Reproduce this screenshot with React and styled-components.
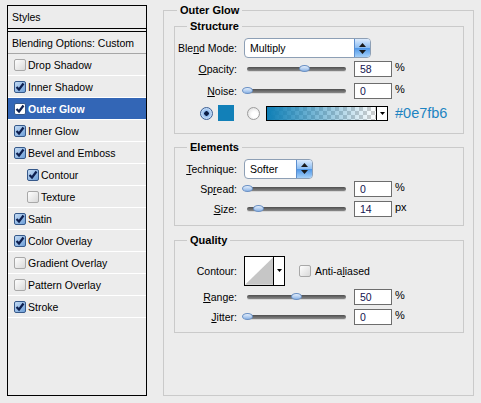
import React from "react";
import styled, { createGlobalStyle } from "styled-components";

const GlobalStyle = createGlobalStyle`
  html, body { margin: 0; padding: 0; background: #ececec; }
  body {
    font-family: "Liberation Sans", Arial, sans-serif;
    font-size: 10.5px;
    color: #000;
  }
  #root { width: 481px; height: 403px; overflow: hidden; }
`;

const Dialog = styled.div`
  display: flex;
  align-items: flex-start;
  gap: 16px;
  padding-left: 7px;
`;

/* ---------- left list ---------- */

const StylesPanel = styled.div`
  margin-top: 5px;
  width: 140px;
  height: 391px;
  box-sizing: border-box;
  border: 1px solid #000;
  display: flex;
  flex-direction: column;
`;

const PanelTitle = styled.div`
  height: 22px;
  line-height: 22px;
  padding-left: 4px;
  border-bottom: 4px double #000;
`;

const PanelRow = styled.div`
  height: 21px;
  flex-shrink: 0;
  display: flex;
  align-items: center;
  gap: 2px;
  padding-left: ${(p) => (p.$plain ? 4 : p.$indent ? 19 : 6)}px;
  border-bottom: 1px solid ${(p) => (p.$dark ? "#a6a6a6" : "#fff")};
  background: ${(p) => (p.$selected ? "#3366b6" : "transparent")};
  color: ${(p) => (p.$selected ? "#fff" : "#000")};
  font-weight: ${(p) => (p.$selected ? 700 : 400)};
`;

const Box = styled.span`
  width: 12px;
  height: 12px;
  box-sizing: border-box;
  flex-shrink: 0;
  border: 1px solid ${(p) => (p.$checked ? "#36598a" : "#a8a8a8")};
  border-radius: 2px;
  background: ${(p) =>
    p.$white
      ? "#fff"
      : p.$checked
      ? "linear-gradient(135deg, #c4dbf4, #6e9fd8)"
      : "linear-gradient(135deg, #fefefe, #d9d9d9)"};
  display: inline-flex;
  align-items: center;
  justify-content: center;
`;

const Check = ({ checked, white }) => (
  <Box $checked={checked} $white={white}>
    {checked && (
      <svg width="10" height="10" viewBox="0 0 10 10">
        <path d="M1.5 5 L4 7.5 L8.5 1.5" fill="none" stroke="#0d1f4f" strokeWidth="2.2" />
      </svg>
    )}
  </Box>
);

const styleItems = [
  { name: "Drop Shadow", on: false },
  { name: "Inner Shadow", on: true },
  { name: "Outer Glow", on: true, selected: true },
  { name: "Inner Glow", on: true },
  { name: "Bevel and Emboss", on: true },
  { name: "Contour", on: true, indent: true },
  { name: "Texture", on: false, indent: true },
  { name: "Satin", on: true },
  { name: "Color Overlay", on: true },
  { name: "Gradient Overlay", on: false },
  { name: "Pattern Overlay", on: false },
  { name: "Stroke", on: true },
];

/* ---------- right side ---------- */

const Group = styled.fieldset`
  margin: ${(p) => p.$mt || 0}px 0 0;
  padding: ${(p) => p.$pad};
  border: 1px solid #cacaca;
  min-width: 0;
  box-sizing: border-box;
  ${(p) => p.$w && `width: ${p.$w}px;`}
  ${(p) => p.$h && `height: ${p.$h}px;`}
`;

const Legend = styled.legend`
  font-size: 11px;
  font-weight: 700;
  line-height: 12px;
  padding: 0 3px;
  margin-left: ${(p) => p.$ml}px;
`;

const Row = styled.div`
  display: flex;
  align-items: center;
  height: ${(p) => p.$h || 22}px;
  padding-left: ${(p) => p.$pl || 0}px;
`;

const Label = styled.div`
  width: 62px;
  flex-shrink: 0;
  text-align: right;
  margin-right: 7px;
  white-space: nowrap;
`;

const Select = styled.div`
  width: ${(p) => p.$w}px;
  height: 20px;
  box-sizing: border-box;
  border: 1px solid #8d9fb5;
  border-radius: 4px;
  background: #fff;
  display: flex;
  align-items: center;
  justify-content: space-between;
  padding-left: 5px;
  overflow: hidden;
`;

const Stepper = styled.span`
  width: 15px;
  height: 100%;
  border-left: 1px solid #5c8fcf;
  background: linear-gradient(#dcebfd, #8cbdf2 48%, #4f97e8 52%, #a5d0f8);
  display: flex;
  align-items: center;
  justify-content: center;
`;

const Dropdown = ({ value, width }) => (
  <Select $w={width}>
    <span>{value}</span>
    <Stepper>
      <svg width="7" height="11" viewBox="0 0 7 11">
        <path d="M3.5 0 L7 4 L0 4 Z M0 7 L7 7 L3.5 11 Z" fill="#1a1a1a" />
      </svg>
    </Stepper>
  </Select>
);

const SliderWrap = styled.div`
  position: relative;
  width: 103px;
  height: 100%;
  margin-right: 7px;
  padding: 0 1px 0 3px;
  box-sizing: border-box;
  display: flex;
  align-items: center;
`;

const Track = styled.div`
  flex: 1;
  height: 4px;
  border-radius: 2px;
  background: linear-gradient(#4e4e4e, #8a8a8a);
  box-shadow: 0 1px 0 #d6d6d6;
`;

const Thumb = styled.span`
  position: absolute;
  top: 50%;
  width: 11px;
  height: 7px;
  margin-top: -4px;
  border-radius: 50%;
  box-sizing: border-box;
  border: 1px solid #6a90c4;
  background: linear-gradient(#e4effc, #8db4e6);
`;

const Slider = ({ frac }) => (
  <SliderWrap>
    <Track />
    <Thumb style={{ left: `${3 + frac * 98 - 5}px` }} />
  </SliderWrap>
);

const NumBox = styled.div`
  width: 38px;
  height: 16px;
  box-sizing: border-box;
  border: 1px solid #6d6d6d;
  background: #fff;
  padding-left: 5px;
  line-height: 14px;
  color: #141450;
  flex-shrink: 0;
`;

const Unit = styled.span`
  margin-left: 3px;
  margin-top: -4px;
  font-size: 11px;
`;

const Radio = styled.span`
  width: 13px;
  height: 13px;
  box-sizing: border-box;
  border-radius: 50%;
  border: 1px solid ${(p) => (p.$on ? "#3b5f94" : "#9c9c9c")};
  background: ${(p) =>
    p.$on
      ? "radial-gradient(circle at 50% 50%, #0c1d45 0 2px, #8ab6ea 2.5px, #d6e7fb 6px)"
      : "radial-gradient(circle at 60% 60%, #ffffff 30%, #d4d4d4)"};
  flex-shrink: 0;
`;

const Swatch = styled.span`
  width: 16px;
  height: 16px;
  background: #1280b8;
  margin-left: 5px;
  margin-right: 13px;
`;

const GradientBox = styled.div`
  width: 122px;
  height: 15px;
  margin-left: 6px;
  box-sizing: border-box;
  border: 1px solid #000;
  display: flex;
`;

const GradientFill = styled.div`
  flex: 1;
  background:
    linear-gradient(to right, #0e7fb6, rgba(14, 127, 182, 0)),
    conic-gradient(#cfcfcf 25%, #fff 0 50%, #cfcfcf 0 75%, #fff 0) 0 0 / 8px 8px;
`;

const ArrowCell = styled.div`
  width: 10px;
  border-left: 1px solid #000;
  background: #fff;
  display: flex;
  align-items: center;
  justify-content: center;
`;

const Hex = styled.span`
  margin-left: 7px;
  font-size: 14.5px;
  color: #1d84c2;
`;

const ContourPicker = styled.div`
  width: 41px;
  height: 30px;
  box-sizing: border-box;
  border: 1px solid #000;
  display: flex;
  background: #fff;
`;

const ContourArrow = styled.div`
  width: 10px;
  border-left: 1px solid #000;
  display: flex;
  align-items: center;
  justify-content: center;
`;

const AntiAlias = styled.label`
  display: flex;
  align-items: center;
  gap: 4px;
  margin-left: 14px;
`;

const DownArrow = () => (
  <svg width="5" height="3" viewBox="0 0 5 3">
    <path d="M0 0 L5 0 L2.5 3 Z" fill="#000" />
  </svg>
);

const SliderRow = ({ label, frac, value, unit, h }) => (
  <Row $h={h}>
    <Label>{label}</Label>
    <Slider frac={frac} />
    <NumBox>{value}</NumBox>
    <Unit>{unit}</Unit>
  </Row>
);

export default function App() {
  return (
    <>
      <GlobalStyle />
      <Dialog>
        <StylesPanel>
          <PanelTitle>Styles</PanelTitle>
          <PanelRow $plain $dark>
            Blending Options: Custom
          </PanelRow>
          {styleItems.map((it) => (
            <PanelRow key={it.name} $indent={it.indent} $selected={it.selected}>
              <Check checked={it.on} white={it.selected} />
              {it.name}
            </PanelRow>
          ))}
        </StylesPanel>

        <Group $mt={4} $w={311} $h={392} $pad="4px 9px 0 10px">
          <Legend $ml={3}>Outer Glow</Legend>

          <Group $pad="6px 0 9px 0">
            <Legend $ml={12}>Structure</Legend>
            <Row $h={20}>
              <Label>
                Ble<u>n</u>d Mode:
              </Label>
              <Dropdown value="Multiply" width={127} />
            </Row>
            <SliderRow label={<><u>O</u>pacity:</>} frac={0.58} value="58" unit="%" />
            <SliderRow label={<><u>N</u>oise:</>} frac={0} value="0" unit="%" />
            <Row $pl={25}>
              <Radio $on />
              <Swatch />
              <Radio />
              <GradientBox>
                <GradientFill />
                <ArrowCell>
                  <DownArrow />
                </ArrowCell>
              </GradientBox>
              <Hex>#0e7fb6</Hex>
            </Row>
          </Group>

          <Group $mt={7} $pad="5px 0 6px 0">
            <Legend $ml={12}>Elements</Legend>
            <Row $h={21}>
              <Label>
                <u>T</u>echnique:
              </Label>
              <Dropdown value="Softer" width={69} />
            </Row>
            <SliderRow h={20} label={<>Sp<u>r</u>ead:</>} frac={0} value="0" unit="%" />
            <SliderRow h={20} label={<><u>S</u>ize:</>} frac={0.11} value="14" unit="px" />
          </Group>

          <Group $mt={8} $pad="8px 0 5px 0">
            <Legend $ml={12}>Quality</Legend>
            <Row $h={33}>
              <Label>Contour:</Label>
              <ContourPicker>
                <svg width="29" height="28" viewBox="0 0 29 28">
                  <path d="M0 28 L29 0 L29 28 Z" fill="#c6c6c6" />
                </svg>
                <ContourArrow>
                  <DownArrow />
                </ContourArrow>
              </ContourPicker>
              <AntiAlias>
                <Check checked={false} />
                <span>
                  Anti-a<u>l</u>iased
                </span>
              </AntiAlias>
            </Row>
            <SliderRow h={20} label={<><u>R</u>ange:</>} frac={0.5} value="50" unit="%" />
            <SliderRow h={20} label={<><u>J</u>itter:</>} frac={0} value="0" unit="%" />
          </Group>
        </Group>
      </Dialog>
    </>
  );
}
